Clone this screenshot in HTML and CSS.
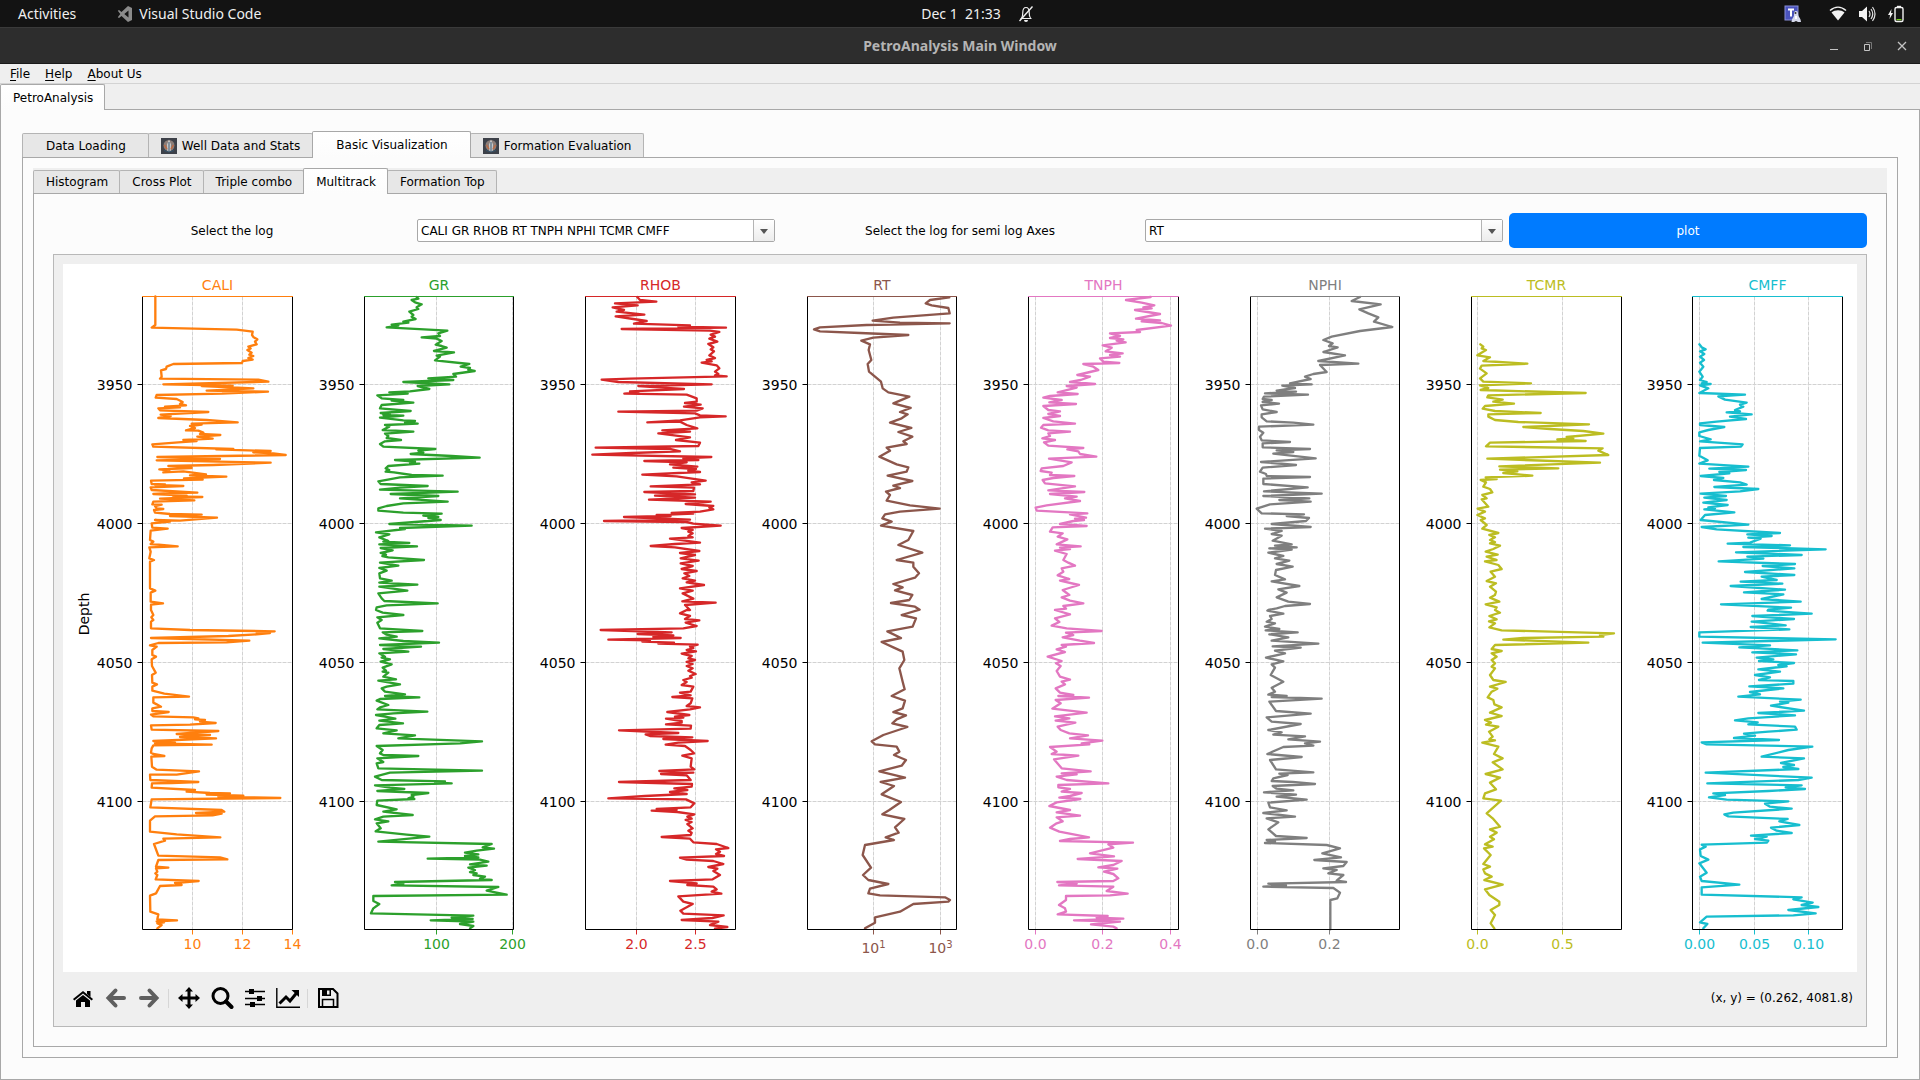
FILE: index.html
```html
<!DOCTYPE html>
<html lang="en">
<head>
<meta charset="utf-8">
<title>PetroAnalysis Main Window</title>
<link rel="stylesheet" href="styles.css">
</head>
<body>
<header class="topbar">
  <div class="topbar-left">
    <span>Activities</span>
    <span class="app-name">
      <svg width="16" height="16" viewBox="0 0 16 16" aria-hidden="true"><path d="M11 0l4 2v12l-4 2-6.500-6L2 12 .8 11.200 3.300 8 .8 4.800 2 4l2.500 2zM11.500 4.500L7.300 8l4.200 3.500z" fill="#8b8b8b" fill-rule="evenodd"/></svg>
      Visual Studio Code
    </span>
  </div>
  <div class="topbar-clock">
    <span>Dec 1&nbsp; 21:33</span>
    <svg width="16" height="18" viewBox="0 0 16 18" aria-hidden="true"><g fill="none" stroke="#f0f0f0"><path d="M2.500 13.500h11M3.500 13c1.200-1.500 1.300-3 1.300-5.500C4.800 4 6 2.500 8 2.500s3.200 1.500 3.200 5c0 2.500.2 4 1.300 5.500" stroke-width="1.200"/><path d="M1.500 16L14.500 1.500" stroke-width="1.400"/></g><path d="M6 15h4a2 2 0 0 1-4 0z" fill="#f0f0f0"/></svg>
  </div>
  <div class="topbar-right">
    <svg class="teams" width="18" height="18" viewBox="0 0 18 18" aria-hidden="true"><rect x="1" y="1" width="13" height="14" fill="#4a53bc" stroke="#8a90d8"/><path d="M4 4.500h6M7 4.500v7" stroke="#fff" stroke-width="2"/><path d="M12 6c2 0 2 2 2.200 4 .2 1.500 2 3 2.300 4.500l.5 2.500h-3l-2-1-2 1H7.500l.5-2.500c.5-1.500 2-2.500 2-4.500s0-4 2-4z" fill="#d5d8ea"/><path d="M11 11h2v3h-2z" fill="#fff"/><circle cx="11.500" cy="8" r="1" fill="#333"/></svg>
    <svg width="18" height="18" viewBox="0 0 18 18" aria-hidden="true"><path d="M1 5.500C6 1 12 1 17 5.500" fill="none" stroke="#f2f2f2" stroke-width="1.500"/><path d="M2.500 7.500C6 4.500 12 4.500 15.500 7.500L9 15.500z" fill="#f2f2f2"/></svg>
    <svg width="18" height="18" viewBox="0 0 18 18" aria-hidden="true"><path d="M1 6h3l5-4.500v15L4 12H1z" fill="#f2f2f2"/><path d="M11 6q2 3 0 6M13 4q3.500 5 0 10M14.500 2q5 7 0 14" fill="none" stroke="#e0e0e0" stroke-width="1.200"/></svg>
    <svg width="18" height="18" viewBox="0 0 18 18" aria-hidden="true"><path d="M4.500 4L1 10h2l-.5 4L6 8H4z" fill="#f2f2f2"/><rect x="8" y="2.500" width="8" height="14" rx="1.500" fill="none" stroke="#f2f2f2" stroke-width="1.400"/><path d="M10 .8h4v1.500h-4z" fill="#f2f2f2"/><path d="M9.500 14h5v1.200h-5z" fill="#73d216"/></svg>
  </div>
</header>
<div class="titlebar">
  <h1>PetroAnalysis Main Window</h1>
  <div class="window-buttons">
    <button aria-label="Minimize"><svg width="10" height="10" viewBox="0 0 10 10"><path d="M1 8.500h8" stroke="#c4c4c4"/></svg></button>
    <button aria-label="Restore"><svg width="10" height="10" viewBox="0 0 10 10"><path d="M1.500 3.500h5v6h-5z" fill="none" stroke="#c4c4c4"/><path d="M3 1.500h5.500V8" fill="none" stroke="#777"/></svg></button>
    <button aria-label="Close"><svg width="10" height="10" viewBox="0 0 10 10"><path d="M1 1l8 8M9 1L1 9" stroke="#c4c4c4" stroke-width="1.300"/></svg></button>
  </div>
</div>
<nav class="menubar">
  <button><u>F</u>ile</button>
  <button><u>H</u>elp</button>
  <button><u>A</u>bout Us</button>
</nav>
<main>
  <div class="tabs tabs-root" role="tablist">
    <button class="tab selected" role="tab" aria-selected="true">PetroAnalysis</button>
  </div>
  <section class="pane pane-root">
    <div class="tabs tabs-main" role="tablist">
      <button class="tab" role="tab">Data Loading</button>
      <button class="tab with-icon" role="tab"><svg width="16" height="16" viewBox="0 0 16 16" aria-hidden="true"><rect width="16" height="16" fill="#3d4149"/><circle cx="8" cy="7.500" r="5.500" fill="#8b7d78"/><path d="M8 1.500l2 5-.5 7h-3l-.5-7z" fill="#cfd0d0"/><path d="M3.500 7l2.500 4M12.500 7L10 11" stroke="#c4683c" stroke-width="1.300"/><path d="M8 4v9M3 12.500q5 3 10 0" stroke="#35536b" fill="none"/></svg>Well Data and Stats</button>
      <button class="tab selected" role="tab" aria-selected="true">Basic Visualization</button>
      <button class="tab with-icon" role="tab"><svg width="16" height="16" viewBox="0 0 16 16" aria-hidden="true"><rect width="16" height="16" fill="#3d4149"/><circle cx="8" cy="7.500" r="5.500" fill="#8b7d78"/><path d="M8 1.500l2 5-.5 7h-3l-.5-7z" fill="#cfd0d0"/><path d="M3.500 7l2.500 4M12.500 7L10 11" stroke="#c4683c" stroke-width="1.300"/><path d="M8 4v9M3 12.500q5 3 10 0" stroke="#35536b" fill="none"/></svg>Formation Evaluation</button>
    </div>
    <section class="pane pane-main">
      <div class="tabs tabs-sub" role="tablist">
        <button class="tab" role="tab">Histogram</button>
        <button class="tab" role="tab">Cross Plot</button>
        <button class="tab" role="tab">Triple combo</button>
        <button class="tab selected" role="tab" aria-selected="true">Multitrack</button>
        <button class="tab" role="tab">Formation Top</button>
      </div>
      <section class="pane pane-sub">
        <form class="controls">
          <label for="logs">Select the log</label>
          <span class="combo"><select id="logs"><option>CALI GR RHOB RT TNPH NPHI TCMR CMFF</option></select></span>
          <label for="semilog">Select the log for semi log Axes</label>
          <span class="combo"><select id="semilog"><option>RT</option></select></span>
          <button class="plot-button" type="button">plot</button>
        </form>
        <div class="figure-frame">
          <svg class="figure" id="figure" viewBox="0 0 1794 708" role="img" aria-label="Multitrack well logs against depth"></svg>
          <div class="toolbar">
            <button aria-label="Home"><svg width="24" height="24" viewBox="0 0 24 24"><path d="M12 5l10 8-1.300 1.500L12 7.600l-8.700 6.900L2 13z"/><path d="M16 5h3.500v6L16 8z"/><path d="M12 9l7 5.500V21h-5v-5h-4v5H5v-6.500z"/></svg></button>
            <button aria-label="Back"><svg width="24" height="24" viewBox="0 0 24 24"><path d="M11.500 4.500L4.500 12l7 7.500M5 12h15" fill="none" stroke="#5f5f5f" stroke-width="4" stroke-linecap="round"/></svg></button>
            <button aria-label="Forward"><svg width="24" height="24" viewBox="0 0 24 24"><path d="M12.500 4.500l7 7.500-7 7.500M19 12H4" fill="none" stroke="#5f5f5f" stroke-width="4" stroke-linecap="round"/></svg></button>
            <span class="separator"></span>
            <button aria-label="Pan"><svg width="24" height="24" viewBox="0 0 24 24"><path d="M12 1l4 4.500h-2.500v5h5V8L23 12l-4.500 4v-2.500h-5v5H16L12 23l-4-4.500h2.500v-5h-5V16L1 12l4.500-4v2.500h5v-5H8z"/></svg></button>
            <button aria-label="Zoom"><svg width="24" height="24" viewBox="0 0 24 24"><circle cx="10.500" cy="10" r="7.500" fill="none" stroke="#000" stroke-width="3"/><path d="M16 15.500l5.500 5.500" stroke="#000" stroke-width="4" stroke-linecap="round"/></svg></button>
            <button aria-label="Subplots"><svg width="24" height="24" viewBox="0 0 24 24"><path d="M2 5.500h20M2 12.500h20M2 18.500h20" stroke="#000" stroke-width="1.500"/><path d="M6 3h5v5H6zM14 10h5v5h-5zM7 16h5v5H7z"/></svg></button>
            <button aria-label="Customize"><svg width="24" height="24" viewBox="0 0 24 24"><path d="M.8 2v19.300H24" fill="none" stroke="#000" stroke-width="1.400"/><path d="M3.500 17.500L10 11l4 4 7-8.500" fill="none" stroke="#000" stroke-width="3"/><path d="M15.500 4H23v7z"/></svg></button>
            <span class="separator"></span>
            <button aria-label="Save"><svg width="24" height="24" viewBox="0 0 24 24"><path d="M3 3h14l4.500 4.500V21H3z" fill="none" stroke="#000" stroke-width="2"/><path d="M6 3h9v7H6z"/><path d="M11 4.500h2.500v4H11z" fill="#eee"/><path d="M6.500 21v-7.500h11V21" fill="none" stroke="#000" stroke-width="1.500"/></svg></button>
            <output class="coordinates">(x, y) = (0.262, 4081.8)</output>
          </div>
        </div>
      </section>
    </section>
  </section>
</main>
<script src="tracks.js"></script>
</body>
</html>
```
FILE: styles.css
```css
* { box-sizing: border-box; }

body {
  margin: 0;
  min-height: 100vh;
  background: #efefef;
  color: #000;
  font: 12px/16px "DejaVu Sans", sans-serif;
}

button, select {
  font: inherit;
  color: inherit;
}

svg { display: block; }

.topbar {
  display: grid;
  grid-template-columns: 1fr auto 1fr;
  align-items: center;
  height: 27px;
  padding: 0 15px 0 18px;
  background: #131313;
  color: #f0f0f0;
  font: 14px/20px "Noto Sans", sans-serif;
}

.topbar-left, .topbar-right, .topbar-clock, .app-name {
  display: flex;
  align-items: center;
}

.topbar-left { gap: 41px; }
.app-name { gap: 6px; }
.topbar-clock { gap: 17px; padding-left: 32px; }
.topbar-right { justify-content: flex-end; gap: 11px; }
.teams { margin-right: 16px; }

.titlebar {
  display: grid;
  grid-template-columns: 1fr auto 1fr;
  align-items: center;
  height: 37px;
  padding: 0 12px;
  background: #2d2d2d;
  border-top: 1px solid #3a3a3a;
  border-bottom: 1px solid #1a1a1a;
}

.titlebar h1 {
  grid-column: 2;
  margin: 0;
  color: #b4b4b4;
  font: bold 14px/20px "Noto Sans", sans-serif;
}

.window-buttons {
  display: flex;
  justify-content: flex-end;
  gap: 22px;
}

.window-buttons button {
  padding: 1px;
  border: 0;
  background: none;
}

.menubar {
  display: flex;
  gap: 15px;
  height: 20px;
  padding: 0 10px;
  border-bottom: 1px solid #d3d3d3;
}

.menubar button {
  padding: 0;
  border: 0;
  background: none;
}

.menubar u { text-underline-offset: 2px; }

.tabs {
  display: flex;
  align-items: flex-end;
}

.tab {
  height: 24px;
  margin-left: -1px;
  padding: 0 11px 0 12px;
  border: 1px solid #b4b4b4;
  border-bottom: 0;
  border-radius: 2px 2px 0 0;
  background: #e7e7e7;
  white-space: nowrap;
}

.tab:first-child { margin-left: 0; }

.tab.selected {
  z-index: 1;
  height: 27px;
  margin-bottom: -1px;
  border-color: #a8a8a8;
  background: linear-gradient(#fff, #fcfcfc);
}

.tabs-root { height: 25px; }
.tabs-root .selected { height: 26px; }
.tabs-main { height: 26px; }
.tabs-main .tab { padding: 0 22px 0 23px; }
.tabs-main .with-icon {
  display: flex;
  align-items: center;
  gap: 5px;
  padding: 0 12px;
}
.tabs-sub { height: 25px; background: #efefef; }
.tabs-sub .tab { height: 23px; }
.tabs-sub .selected { height: 26px; }

.pane {
  border: 1px solid #a8a8a8;
  background: #fcfcfc;
}

.pane-root { padding: 21px; }
.pane-main { padding: 10px; }
.pane-sub { padding: 19px; }

.controls {
  display: grid;
  grid-template-columns: repeat(5, 1fr);
  align-items: center;
  gap: 6px;
  margin-bottom: 6px;
}

.controls label { text-align: center; }

.combo {
  position: relative;
  display: block;
}

.combo::before {
  content: "";
  position: absolute;
  inset: 1px 1px 1px auto;
  width: 20px;
  border-left: 1px solid #b4b4b4;
  background: linear-gradient(#fff, #ececec);
  pointer-events: none;
}

.combo::after {
  content: "";
  position: absolute;
  top: 10px;
  right: 7px;
  border: 4px solid transparent;
  border-top: 5px solid #555;
  border-bottom: 0;
  pointer-events: none;
}

.combo select {
  display: block;
  width: 100%;
  height: 23px;
  padding: 0 24px 0 3px;
  appearance: none;
  border: 1px solid #a8a8a8;
  border-radius: 2px;
  background: #fff;
}

.plot-button {
  height: 35px;
  border: 0;
  border-radius: 5px;
  background: #007bff;
  color: #fff;
}

.figure-frame {
  padding: 9px 9px 0;
  border: 1px solid #b8b8b8;
  background: #efefef;
}

.figure {
  width: 100%;
  height: auto;
  background: #fff;
  font: 14px "DejaVu Sans", sans-serif;
}

.figure .sup { font-size: 10px; }
.figure .spine { fill: none; stroke: #000; stroke-width: 1; }
.figure .grid { stroke: #d2d2d2; stroke-width: 1; stroke-dasharray: 4 1; }
.figure .curve { fill: none; stroke-width: 7; stroke-linejoin: round; stroke-linecap: round; }

.toolbar {
  display: flex;
  align-items: center;
  height: 54px;
  padding: 0 4px 2px 3px;
}

.toolbar button {
  display: grid;
  place-items: center;
  width: 33px;
  height: 30px;
  padding: 0;
  border: 0;
  background: none;
}

.separator {
  width: 1px;
  height: 19px;
  margin: 0 3px;
  background: #d6d6d6;
}

.coordinates { margin-left: auto; }
```
FILE: tracks.js
```js
// Each curve is sampled on a grid three times finer than the figure.
// "upper" and "lower" are the two halves of the depth range; ox shifts x onto the figure.
const LOWER_SHIFT = 1050;
const TOP = 32.5, BOTTOM = 665.5;
const DEPTHS = [[3950, 120.5], [4000, 259.5], [4050, 398.5], [4100, 537.5]];

const TRACKS = [
{ name: "CALI", color: "#ff7f0e", left: 79.5, right: 229.5, ox: -69,
  ticks: [["10", 129.5], ["12", 179.5], ["14", 229.5]],
  upper: "346,139 346,225 335,233 590,239 638,245 636,255 641,262 652,268 645,275 650,283 625,290 632,295 622,300 635,308 628,314 640,318 625,324 638,329 608,333 606,339 400,342 380,350 378,357 363,361 365,380 360,386 655,389 685,395 370,403 578,407 485,408 640,415 500,422 684,425 546,431 350,435 347,443 410,447 428,456 420,462 438,466 375,470 420,472 355,475 360,481 505,486 362,494 392,498 355,504 500,510 593,517 455,521 485,524 450,528 465,534 438,541 475,542 490,548 480,552 541,555 472,560 518,566 430,570 470,573 415,577 337,583 340,590 580,597 528,598 692,603 640,607 700,610 737,615 352,621 540,627 350,631 692,638 520,645 385,648 455,654 358,658 388,662 370,667 430,664 498,673 450,676 559,680 432,685 488,689 333,692 335,702 375,703 345,705 430,708 332,712 335,720 472,728 370,730 340,732 440,737 400,739 487,741 360,746 463,751 340,755 337,763 365,764 345,768 350,775 370,777 342,780 345,788 390,792 485,794 390,798 531,803 420,812 345,810 390,815 335,820 337,833 383,836 332,842 330,870 340,875 332,882 413,889 328,892 332,905 328,925 342,930 330,935 330,1015 346,1022 332,1028 332,1055 369,1060 333,1064 333,1080",
  lower: "333,30 340,45 334,52 340,60 333,65 333,85 450,90 704,94 650,97 690,99 650,103 565,108 333,114 628,122 560,127 355,129 330,136 350,140 337,150 337,165 348,170 335,178 336,198 347,218 336,225 337,248 351,253 337,260 337,272 373,281 447,290 340,292 340,308 350,313 363,320 337,325 337,333 386,336 333,344 340,349 460,352 475,355 465,358 495,360 480,365 527,369 450,374 333,376 335,389 535,393 410,402 510,405 420,411 528,415 340,423 405,428 345,430 515,434 340,436 335,445 333,458 340,462 373,468 334,470 336,500 350,509 477,514 410,524 330,524 331,540 475,546 395,549 336,550 335,563 465,570 440,575 510,579 570,580 500,584 610,587 535,590 721,594 335,598 331,622 545,630 553,635 468,639 545,641 518,646 345,649 330,662 330,695 410,703 541,712 370,716 375,722 342,732 355,767 540,772 562,778 355,780 348,800 385,803 348,805 352,815 346,820 352,825 347,838 476,843 405,849 425,855 360,858 348,880 330,887 331,935 355,943 352,958 411,961 350,964 372,967 352,970 365,975 352,985" },
{ name: "GR", color: "#2ca02c", left: 301.5, right: 450.5, ox: -69,
  ticks: [["100", 373.5], ["200", 449.5]],
  upper: "1130,141 1135,146 1115,150 1125,157 1145,163 1130,172 1135,177 1108,185 1120,195 1115,200 1127,207 1090,215 1105,218 1055,224 1075,227 1040,232 1222,242 1195,250 1200,258 1145,262 1190,266 1205,273 1187,284 1205,288 1220,293 1182,303 1242,307 1190,317 1200,320 1185,331 1288,342 1262,350 1290,354 1285,359 1304,363 1240,372 1248,380 1165,385 1240,390 1090,396 1228,403 1133,408 1168,417 1110,424 1048,427 1103,431 1012,436 1025,445 1090,450 1055,452 1120,458 1025,465 1020,475 1112,483 1022,489 1050,493 1030,495 1090,497 1020,503 1090,511 1125,513 1095,517 1133,521 1035,525 1048,530 1028,540 1120,545 1035,551 1045,558 1040,564 1083,570 1035,574 1020,582 1030,590 1186,597 1135,602 1150,608 1112,612 1235,618 1319,623 1065,630 1125,635 1110,638 1138,641 1045,648 1037,655 1048,660 1037,665 1062,667 1115,675 1208,677 1080,682 1015,694 1022,702 1163,708 1080,713 1020,719 1253,725 1052,732 1195,738 1080,745 1223,755 1090,760 1040,768 1015,775 1015,782 1090,788 1205,791 1150,797 1195,801 1165,804 1202,810 1048,822 1295,827 1080,834 1095,837 1008,847 1048,853 1018,862 1045,873 1030,875 1108,879 1018,883 1131,889 1022,894 1058,901 1022,909 1038,914 1027,918 1045,922 1152,930 1020,938 1075,947 1018,954 1040,962 1018,970 1020,985 1055,992 1018,998 1132,1004 1018,1010 1102,1022 1015,1030 1025,1045 1033,1053 1193,1060 1040,1066 1010,1072 1008,1080",
  lower: "1008,30 1028,38 1090,45 1012,52 1025,60 1012,68 1020,85 1147,93 1028,97 1040,104 1070,110 1018,115 1090,123 1197,128 1020,135 1143,140 1030,147 1105,155 1018,160 1035,170 1025,173 1050,178 1022,185 1055,193 1028,203 1038,212 1028,215 1045,218 1030,230 1068,238 1015,242 1080,253 1040,260 1025,265 1035,275 1095,283 1035,288 1138,292 1020,297 1010,302 1045,315 1020,322 1012,328 1162,335 1060,340 1008,345 1035,350 1066,356 1018,362 1089,370 1018,375 1010,385 1070,391 1030,400 1125,406 1075,415 1326,424 1260,430 1010,438 1028,450 1020,460 1030,465 1135,468 1012,475 1030,486 1010,490 1015,505 1326,512 1050,518 1005,530 1025,540 1215,544 1185,547 1235,550 1005,556 1050,563 1093,567 1012,573 1165,579 1115,585 1120,590 1105,595 1123,597 1012,602 1010,615 1070,628 1030,635 1118,645 1030,650 1005,658 1045,664 1010,670 1022,685 1007,694 1100,704 1168,710 1015,725 1355,732 1328,742 1362,746 1310,752 1275,758 1315,763 1275,768 1315,772 1163,776 1320,779 1345,785 1290,793 1340,797 1285,803 1305,810 1290,816 1310,820 1300,825 1335,830 1320,836 1355,840 1065,846 1090,851 1055,856 1375,861 1340,872 1370,878 1400,884 1000,888 1000,903 1018,912 1000,925 993,940 1300,947 1235,953 1298,957 1172,961 1300,965 1260,972 1300,978 1290,985" },
{ name: "RHOB", color: "#d62728", left: 522.5, right: 672.5, ox: 1311,
  ticks: [["2.0", 573.5], ["2.5", 632.5]],
  upper: "412,141 420,150 469,155 345,160 413,166 338,172 372,180 350,185 433,194 347,199 400,207 440,213 402,221 570,226 535,230 678,233 365,237 630,242 658,246 632,254 645,260 628,266 652,275 625,282 640,292 632,298 642,304 628,316 645,324 620,330 635,334 605,338 650,346 658,355 645,365 655,372 645,376 680,379 390,386 305,389 355,396 635,403 415,408 485,413 552,417 390,424 415,427 373,431 560,434 590,445 590,455 555,459 602,464 552,470 608,475 590,482 355,485 585,490 600,496 677,499 600,502 540,511 442,517 540,515 560,525 592,535 487,541 570,545 475,550 570,562 528,570 600,578 595,588 287,593 510,597 540,604 395,609 277,614 634,621 550,625 595,630 433,633 560,637 510,643 592,650 520,653 588,657 565,662 600,666 427,674 530,679 617,692 575,697 600,703 452,709 582,713 580,723 433,726 585,733 465,737 585,743 447,749 632,755 557,762 640,768 628,773 640,778 600,785 515,789 580,791 470,795 512,798 372,801 570,809 312,813 560,816 580,821 662,827 545,834 578,840 565,845 578,850 565,858 578,862 510,866 600,878 525,882 452,888 525,892 598,903 540,909 585,915 542,925 596,932 542,940 578,948 545,957 590,963 553,970 568,978 548,985 585,992 560,997 612,1005 540,1015 578,1022 548,1030 580,1046 547,1054 647,1058 555,1065 570,1080",
  lower: "560,30 540,40 570,48 555,57 598,61 557,68 590,78 550,85 302,90 515,97 413,102 520,106 460,111 542,114 325,119 450,121 427,125 522,128 475,131 593,134 570,140 580,144 560,150 588,154 545,161 575,168 565,175 585,180 560,186 578,192 560,198 578,205 565,212 587,222 570,228 575,233 550,240 560,246 545,255 580,260 572,275 540,278 572,286 517,291 577,295 572,310 560,318 600,322 570,328 502,336 568,345 525,350 550,353 498,356 545,363 545,368 498,373 573,377 572,386 357,391 535,399 437,403 450,408 577,412 490,417 623,423 535,428 497,434 555,438 572,450 582,460 547,467 575,475 572,500 583,508 478,513 580,518 483,522 560,526 572,540 357,546 576,552 575,560 523,565 562,570 510,576 560,582 435,588 325,595 558,598 583,610 572,622 470,627 530,630 455,632 532,636 583,643 562,650 575,656 557,660 575,666 562,672 578,685 565,692 575,698 572,705 485,711 570,716 580,727 650,732 685,744 648,748 660,755 648,762 672,768 540,773 560,779 640,783 670,792 625,801 652,806 640,813 660,825 638,838 510,843 590,850 562,855 640,860 650,868 635,875 664,881 535,889 550,905 578,912 560,922 541,932 550,941 671,946 637,954 545,960 655,965 630,975 682,981 645,986" },
{ name: "RT", color: "#8c564b", left: 744.5, right: 893.5, ox: 1311, log: true,
  ticks: [["1", 810.5], ["3", 877.5]],
  upper: "1348,142 1290,150 1277,160 1295,166 1345,174 1349,190 1180,203 1118,212 1200,218 1349,220 1100,225 960,232 942,238 960,244 1080,249 1225,255 1120,263 1084,272 1110,283 1106,300 1110,315 1114,330 1103,342 1107,365 1143,395 1148,415 1165,427 1228,440 1180,460 1232,474 1200,486 1223,493 1205,505 1170,518 1234,534 1195,546 1237,560 1210,574 1220,582 1160,593 1170,602 1138,620 1190,643 1225,652 1220,665 1163,677 1237,693 1180,707 1200,714 1158,725 1170,735 1160,752 1230,766 1319,776 1200,785 1155,793 1147,805 1175,815 1143,827 1240,843 1225,870 1195,885 1267,908 1190,930 1240,938 1240,950 1257,970 1245,983 1180,1002 1208,1012 1185,1021 1237,1035 1228,1050 1173,1059 1245,1070 1259,1079",
  lower: "1259,29 1205,45 1248,55 1238,80 1162,94 1203,114 1145,126 1180,142 1208,155 1213,180 1198,205 1208,245 1214,268 1175,288 1215,302 1208,325 1180,336 1218,346 1190,358 1177,370 1222,381 1150,405 1115,424 1125,433 1190,440 1198,455 1182,465 1218,480 1205,497 1138,514 1215,533 1142,546 1182,558 1145,583 1203,606 1168,630 1147,643 1213,657 1185,682 1196,698 1157,712 1182,720 1095,735 1088,765 1113,803 1089,825 1105,840 1165,852 1110,866 1105,880 1140,886 1335,892 1350,900 1345,905 1240,912 1200,935 1125,952 1125,968 1095,985" },
{ name: "TNPH", color: "#e377c2", left: 965.5, right: 1115.5, ox: 2691,
  ticks: [["0.0", 972.5], ["0.2", 1039.5], ["0.4", 1107.5]],
  upper: "572,141 498,150 545,158 583,166 550,172 575,175 525,180 600,192 528,206 600,211 545,214 605,219 633,227 530,240 540,246 450,250 480,258 450,264 490,268 470,272 497,277 428,286 455,293 437,304 488,310 450,315 480,320 420,325 430,335 478,339 370,342 400,350 415,360 352,375 390,380 362,390 330,396 405,402 320,408 350,413 293,427 353,432 270,438 250,443 305,450 268,457 348,462 250,468 265,480 300,484 265,492 300,498 250,504 280,514 345,521 250,525 243,533 265,541 330,545 265,550 270,558 247,565 285,570 252,577 265,587 370,594 322,598 355,604 360,612 409,620 267,626 335,637 310,648 245,655 242,663 275,668 270,675 343,678 280,684 248,690 255,700 345,709 265,721 373,726 270,732 350,740 315,745 360,753 260,766 227,773 230,782 382,790 330,793 378,803 345,806 372,810 340,813 300,822 380,828 278,832 270,845 308,850 293,860 322,868 290,883 362,889 300,893 330,897 285,902 320,912 310,930 325,938 345,947 305,955 310,965 293,976 328,987 300,992 357,1005 308,1020 328,1035 305,1042 330,1052 370,1060 310,1068 318,1076 285,1080",
  lower: "285,30 330,43 285,55 298,66 275,77 320,85 425,93 318,98 340,105 308,112 360,122 402,129 305,135 318,140 290,148 315,156 263,170 305,183 288,190 302,198 290,213 300,230 330,239 305,245 315,253 287,265 300,278 340,285 295,288 387,293 287,300 302,310 277,326 380,338 285,349 328,355 287,362 346,368 293,380 302,390 328,400 384,406 330,415 427,422 365,430 388,433 270,441 290,455 275,462 355,467 282,478 305,505 392,514 305,520 350,523 290,530 320,540 445,550 295,555 295,562 330,567 305,575 365,579 330,588 298,593 361,597 290,607 268,618 330,630 290,637 360,647 290,652 308,664 290,670 270,683 298,695 387,712 330,717 300,723 519,728 445,733 460,743 390,760 462,769 353,777 485,783 460,795 415,802 472,806 432,815 460,822 475,835 460,843 292,846 350,851 297,856 460,860 440,873 503,881 450,886 318,888 318,900 297,915 315,925 318,935 293,943 443,948 410,953 490,956 342,961 480,965 393,973 460,980 470,985" },
{ name: "NPHI", color: "#7f7f7f", left: 1187.5, right: 1336.5, ox: 2691,
  ticks: [["0.0", 1194.5], ["0.2", 1266.5]],
  upper: "1200,141 1175,153 1262,163 1198,178 1225,190 1255,202 1242,215 1297,231 1200,243 1115,260 1090,270 1118,280 1107,288 1133,292 1090,306 1155,316 1075,333 1195,341 1080,345 1100,366 1060,372 1035,380 1052,387 990,400 1055,403 967,407 1005,414 950,422 1008,425 915,430 1044,434 912,440 908,447 935,450 908,456 957,461 903,466 908,478 950,486 905,493 905,502 920,514 1000,518 1060,524 897,530 897,540 910,548 900,560 905,571 990,576 908,580 908,592 1050,597 950,601 1000,606 940,611 1067,625 903,636 1008,645 908,653 900,665 918,672 920,678 1050,681 910,686 910,702 1043,712 912,724 1085,731 910,738 1048,745 958,750 1052,755 930,763 890,776 905,790 1032,793 980,798 1047,804 1038,813 935,822 1052,831 915,836 965,843 935,852 965,857 938,872 995,883 945,887 1010,892 928,895 995,899 925,908 970,918 945,925 988,932 950,942 998,950 948,960 945,975 975,988 935,994 1018,1008 955,1018 980,1028 950,1042 985,1055 1050,1062 975,1068 950,1075 925,1080",
  lower: "922,32 970,41 930,48 935,57 920,65 945,70 915,80 958,87 917,91 1013,97 928,103 985,112 935,122 1075,131 938,139 1022,143 945,152 975,160 918,173 970,184 935,193 945,203 932,225 970,245 935,263 945,275 925,284 980,288 935,291 1085,296 928,305 948,333 1052,341 920,352 935,365 1022,372 925,390 965,397 940,404 1035,409 985,418 1080,425 1035,430 1060,437 970,441 922,462 1025,471 930,480 948,508 1060,517 958,521 983,525 940,535 935,543 998,546 1065,552 938,558 950,566 1000,571 912,577 1008,584 950,590 1040,599 925,608 930,622 980,631 910,639 1005,650 920,655 955,667 925,688 948,708 1040,714 920,720 945,725 915,729 1100,735 1140,745 1087,760 1143,772 1063,780 1160,786 1150,798 1090,805 1130,810 1105,820 1150,825 1130,842 1158,846 925,851 978,856 910,860 1120,864 1140,878 1132,895 1111,900 1111,988" },
{ name: "TCMR", color: "#bcbd22", left: 1408.5, right: 1558.5, ox: 4131,
  ticks: [["0.0", 1414.5], ["0.5", 1499.5]],
  upper: "121,283 130,290 125,295 138,300 112,316 150,322 130,333 262,341 125,347 120,356 140,370 120,385 130,395 273,400 120,406 145,414 122,420 437,429 145,436 142,442 188,449 160,455 222,461 135,468 128,476 165,483 302,489 145,493 145,500 165,510 235,516 447,523 250,531 330,537 430,543 490,551 380,561 400,565 352,568 437,573 150,578 138,589 488,595 475,602 505,615 142,626 480,638 178,649 355,655 180,659 232,664 190,669 277,677 137,682 170,687 122,690 138,697 130,710 150,717 157,727 127,735 140,745 125,748 145,770 113,776 135,785 112,795 135,805 122,810 140,825 127,836 175,849 148,855 165,862 150,870 165,876 150,880 180,887 160,897 137,905 173,914 140,920 170,930 135,934 175,945 185,957 152,965 165,980 140,993 168,1000 150,1010 168,1025 165,1035 150,1043 178,1055 137,1063 170,1072 165,1080",
  lower: "165,30 180,38 148,48 170,58 147,64 165,70 148,82 185,91 522,100 480,105 490,110 250,114 190,119 445,128 165,135 155,147 185,153 155,160 170,170 155,180 165,190 155,200 165,205 150,225 160,240 197,246 150,260 172,266 155,275 143,292 160,300 163,313 185,322 150,338 185,348 135,360 153,368 138,374 175,380 147,395 158,410 148,418 165,421 127,428 175,440 162,462 188,475 158,487 188,508 137,522 180,533 150,548 168,568 135,580 130,595 183,602 140,640 158,655 180,680 150,688 170,698 150,710 162,718 135,733 158,740 132,745 152,765 130,792 150,800 130,808 135,820 155,830 133,840 188,854 135,868 148,885 178,905 178,915 152,930 165,945 152,970 163,985" },
{ name: "CMFF", color: "#17becf", left: 1629.5, right: 1779.5, ox: 4131,
  ticks: [["0.00", 1636.5], ["0.05", 1691.5], ["0.10", 1745.5]],
  upper: "778,283 785,292 797,298 780,304 793,312 780,320 792,330 780,338 790,350 778,365 788,380 780,390 800,396 785,400 812,402 780,406 805,415 778,429 915,434 835,439 855,449 920,458 900,464 910,470 885,480 900,484 860,487 935,493 870,500 918,507 830,515 780,520 780,525 853,531 805,540 778,547 778,558 812,568 780,574 908,583 903,590 780,594 778,617 803,631 778,641 925,650 808,656 918,660 838,666 868,670 782,678 850,684 822,690 900,697 920,704 823,711 955,717 900,724 782,731 858,738 793,743 860,750 790,758 863,765 805,772 825,775 793,778 883,787 795,795 782,810 925,824 785,831 830,838 1020,849 922,853 995,858 925,863 962,866 930,878 863,881 1050,886 910,891 1157,898 888,907 1085,915 922,920 970,926 836,934 1065,942 968,948 1063,955 915,966 1063,975 965,980 1010,990 902,995 1027,1001 872,1008 1035,1019 912,1027 1030,1033 965,1047 1082,1055 843,1063 1053,1073 985,1079",
  lower: "983,32 1115,41 937,48 1062,57 935,65 985,70 1037,76 932,81 1048,88 778,97 778,110 1187,118 788,128 990,136 898,142 1072,151 937,157 1068,163 950,173 1000,178 957,183 1062,189 1015,195 1040,199 955,208 1020,215 945,225 990,232 957,240 1060,243 1060,251 928,259 1030,265 985,270 930,276 960,283 895,290 1082,299 1020,305 1045,308 993,317 1092,332 955,339 1065,346 925,355 885,361 953,367 925,373 1065,380 1070,389 985,395 912,401 945,407 882,414 1017,420 785,427 800,433 1117,440 1045,450 965,470 1092,475 1023,489 1062,495 1030,501 1075,507 797,518 1115,533 1075,540 802,550 1085,556 1037,562 1095,567 985,573 820,580 855,585 807,592 860,599 1045,604 975,611 990,620 1055,626 880,638 853,643 865,649 1043,657 1018,664 1078,675 993,683 1010,692 1055,699 933,707 980,710 945,717 985,722 980,728 785,734 797,740 780,748 782,768 805,779 778,790 800,818 780,830 785,843 898,854 785,862 785,884 1085,892 1060,898 1118,908 1085,915 1135,921 1045,930 1127,940 1060,946 800,950 780,967 802,972 790,985" }
];

const parse = (text, dx, dy) => text.split(" ").map(p => {
  const [x, y] = p.split(",").map(Number);
  return `${x + dx},${y + dy}`;
}).join(" ");

let grid = "", curves = "", axes = "";
for (const t of TRACKS) {
  for (const [depth, y] of DEPTHS) {
    grid += `<line class="grid" x1="${t.left}" x2="${t.right}" y1="${y}" y2="${y}"/>`;
    axes += `<line x1="${t.left - 5}" x2="${t.left}" y1="${y}" y2="${y}" stroke="#000"/>`
      + `<text x="${t.left - 10}" y="${y + 5}" text-anchor="end">${depth}</text>`;
  }
  for (const [label, x] of t.ticks) {
    grid += `<line class="grid" x1="${x}" x2="${x}" y1="${TOP}" y2="${BOTTOM}"/>`;
    axes += `<line x1="${x}" x2="${x}" y1="${BOTTOM}" y2="${BOTTOM + 5}" stroke="${t.color}"/>`;
    axes += t.log
      ? `<text x="${x}" y="689" text-anchor="middle" fill="${t.color}">10<tspan class="sup" dy="-5">${label}</tspan></text>`
      : `<text x="${x}" y="685" text-anchor="middle" fill="${t.color}">${label}</text>`;
  }
  const points = parse(t.upper, t.ox, -42) + " " + parse(t.lower, t.ox, LOWER_SHIFT - 42);
  curves += `<polyline class="curve" stroke="${t.color}" points="${points}"/>`;
  axes += `<path class="spine" d="M${t.left} ${TOP}V${BOTTOM}H${t.right}V${TOP}"/>`
    + `<line x1="${t.left - 0.5}" x2="${t.right + 0.5}" y1="${TOP}" y2="${TOP}" stroke="${t.color}"/>`
    + `<text x="${(t.left + t.right) / 2}" y="26" text-anchor="middle" fill="${t.color}">${t.name}</text>`;
}

document.getElementById("figure").innerHTML = grid
  + `<svg width="1794" height="708" viewBox="0 0 5382 2124">${curves}</svg>` + axes
  + `<text transform="translate(26 350) rotate(-90)" text-anchor="middle">Depth</text>`;
```
